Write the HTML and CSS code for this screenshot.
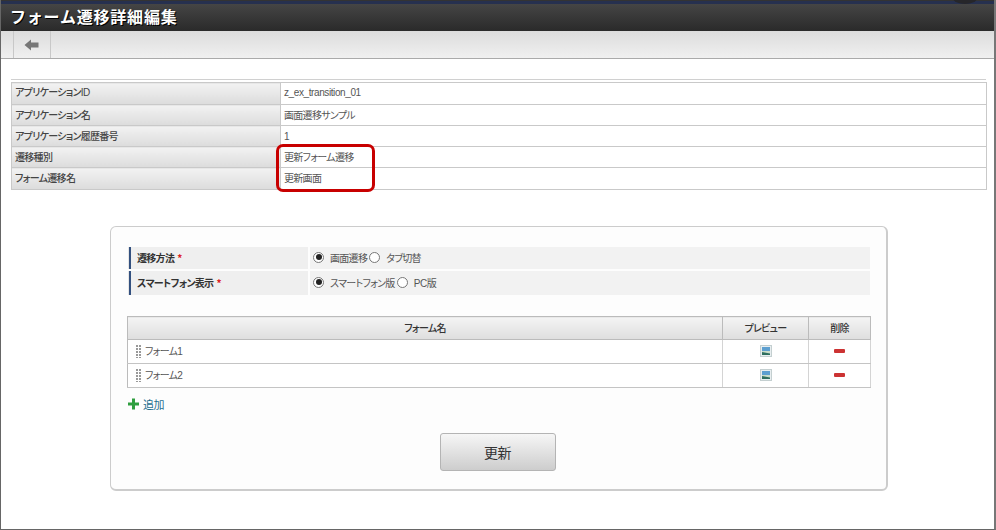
FILE: index.html
```html
<!DOCTYPE html>
<html lang="ja">
<head>
<meta charset="utf-8">
<title>フォーム遷移詳細編集</title>
<link rel="stylesheet" href="styles.css">
</head>
<body>
<div class="window">
  <div class="topline"><span class="notch"></span></div>
  <header class="titlebar"><h1 class="title">フォーム遷移詳細編集</h1></header>
  <nav class="toolbar">
    <button class="tool" type="button" aria-label="戻る">
      <svg width="16" height="12" viewBox="0 0 16 12"><path d="M0.5 6 L7 0.5 V3.5 H14.5 V8.5 H7 V11.5 Z" fill="#777"/></svg>
    </button>
  </nav>
  <main class="content">
    <div class="info-wrap">
      <table class="info">
        <tr><th>アプリケーション<span class="lat">ID</span></th><td><span class="lat">z_ex_transition_01</span></td></tr>
        <tr><th>アプリケーション名</th><td>画面遷移サンプル</td></tr>
        <tr><th>アプリケーション履歴番号</th><td><span class="lat">1</span></td></tr>
        <tr><th>遷移種別</th><td>更新フォーム遷移</td></tr>
        <tr><th>フォーム遷移名</th><td>更新画面</td></tr>
      </table>
      <div class="highlight"></div>
    </div>
    <section class="panel">
      <div class="field">
        <div class="label"><span class="label-text">遷移方法</span><span class="req">*</span></div>
        <div class="value">
          <span class="radio on"></span><span class="opt">画面遷移</span>
          <span class="radio second"></span><span class="opt opt-last">タブ切替</span>
        </div>
      </div>
      <div class="field field-2">
        <div class="label"><span class="label-text">スマートフォン表示</span><span class="req">*</span></div>
        <div class="value">
          <span class="radio on"></span><span class="opt">スマートフォン版</span>
          <span class="radio second"></span><span class="opt opt-last"><span class="lat">PC</span>版</span>
        </div>
      </div>
      <table class="forms">
        <thead>
          <tr><th class="c-name">フォーム名</th><th class="c-prev">プレビュー</th><th class="c-del">削除</th></tr>
        </thead>
        <tbody>
          <tr>
            <td class="c-name"><span class="grip"></span>フォーム<span class="lat">1</span></td>
            <td class="c-icon"><svg width="12" height="12" viewBox="0 0 12 12"><rect x=".5" y=".5" width="11" height="11" fill="#e8eef0" stroke="#c4cfd0"/><rect x="2" y="2" width="8" height="4" fill="#5d9fd0"/><path d="M2 6 H10 V10 H2 Z" fill="#c9dcc9"/><path d="M2 10 V7 L10 8.5 V10 Z" fill="#2f6f5f"/></svg></td>
            <td class="c-icon"><span class="minus"></span></td>
          </tr>
          <tr>
            <td class="c-name"><span class="grip"></span>フォーム<span class="lat">2</span></td>
            <td class="c-icon"><svg width="12" height="12" viewBox="0 0 12 12"><rect x=".5" y=".5" width="11" height="11" fill="#e8eef0" stroke="#c4cfd0"/><rect x="2" y="2" width="8" height="4" fill="#5d9fd0"/><path d="M2 6 H10 V10 H2 Z" fill="#c9dcc9"/><path d="M2 10 V7 L10 8.5 V10 Z" fill="#2f6f5f"/></svg></td>
            <td class="c-icon"><span class="minus"></span></td>
          </tr>
        </tbody>
      </table>
      <a class="add" href="#">
        <svg width="11" height="12" viewBox="0 0 11 12"><path d="M4 0.5 H7 V4.5 H11 V7.5 H7 V11.5 H4 V7.5 H0 V4.5 H4 Z" fill="#2f9e3f"/></svg>
        <span>追加</span>
      </a>
      <div class="actions"><button class="submit" type="button">更新</button></div>
    </section>
  </main>
</div>
</body>
</html>
```
FILE: styles.css
```css
* { box-sizing: border-box; }
html, body { margin: 0; padding: 0; background: #fff; }
body {
  font-family: "Noto Sans CJK JP", "Liberation Sans", sans-serif;
  font-size: 10px;
  color: #444;
  letter-spacing: -.7px;
  font-feature-settings: "palt";
}
.lat { font-family: "Liberation Sans", sans-serif; letter-spacing: -.4px; }
.window {
  position: relative;
  width: 996px;
  height: 530px;
  border-left: 1px solid #666;
  border-right: 2px solid #777;
  border-bottom: 1px solid #666;
  overflow: hidden;
}
.topline {
  position: relative;
  height: 4px;
  background: #26304f;
  border-top: 1px solid #333;
}
.notch {
  position: absolute;
  left: 952px;
  top: -9px;
  width: 24px;
  height: 12px;
  border-radius: 50%;
  background: #26262a;
}
.titlebar {
  height: 27px;
  background: linear-gradient(#454545, #2a2a2a);
  padding-left: 9px;
}
.title {
  margin: 0;
  font-size: 16px;
  line-height: 25px;
  font-weight: 700;
  color: #fff;
  letter-spacing: .8px;
  font-feature-settings: normal;
  text-shadow: 1px 1px 0 #000;
}
.toolbar {
  height: 28px;
  background: linear-gradient(#dcdcdc, #f0f0f0);
  border-bottom: 1px solid #aaa;
  padding-left: 12px;
  display: flex;
}
.tool {
  width: 38px;
  height: 27px;
  padding: 0;
  background: transparent;
  border: 0;
  border-left: 1px solid #c8c8c8;
  border-right: 1px solid #c8c8c8;
  display: flex;
  align-items: center;
  justify-content: center;
}
.content { padding: 20px 8px 0 10px; }
.info-wrap {
  position: relative;
  border-top: 1px solid #d0d0d0;
  padding-top: 2px;
}
.info {
  width: 976px;
  border-collapse: collapse;
  background: #fff;
}
.info th, .info td {
  border: 1px solid #c9c9c9;
  height: 21px;
  padding: 0 4px 0 3px;
  text-align: left;
  font-size: 10px;
  line-height: 14px;
}
.info th {
  width: 269px;
  font-weight: 500;
  color: #444;
  background: linear-gradient(#f2f2f2, #dcdcdc);
}
.info td { color: #555; }
.info tr:first-child th, .info tr:first-child td,
.info tr:last-child th, .info tr:last-child td { height: 22px; padding-bottom: 2px; }
.highlight {
  position: absolute;
  left: 265px;
  top: 64px;
  width: 99px;
  height: 48px;
  border: 3px solid #c80000;
  border-radius: 7px;
}
.panel {
  width: 778px;
  height: 265px;
  margin: 36px 0 0 99px;
  padding: 20px 16px 0 16px;
  background: #fdfdfd;
  border: 1px solid #ccc;
  border-bottom-width: 2px;
  border-right-width: 2px;
  border-radius: 6px;
}
.field {
  display: flex;
  height: 22px;
  margin-left: 2px;
  width: 741px;
  gap: 2px;
}
.field-2 { height: 24px; margin-top: 2px; }
.label {
  width: 179px;
  display: flex;
  align-items: center;
  background: #efefef;
  border-left: 2px solid #33507f;
  padding: 0 0 2px 6px;
  font-size: 10px;
  font-weight: 700;
  color: #333;
  box-shadow: -1px 0 0 #e6e6e6;
}
.req { color: #d22; margin-left: 3px; letter-spacing: 0; }
.value {
  flex: 1;
  display: flex;
  align-items: center;
  background: #f2f2f2;
  padding: 0 0 2px 3px;
  color: #555;
}
.radio {
  width: 11px;
  height: 11px;
  border: 1px solid #777;
  border-radius: 50%;
  background: #fff;
  display: flex;
  align-items: center;
  justify-content: center;
  flex: none;
}
.radio.second { margin-left: 2px; }
.radio.on::after {
  content: "";
  width: 6px;
  height: 6px;
  border-radius: 50%;
  background: #222;
}
.opt { margin-left: 6px; }
.opt-last { margin-left: 6px; }
.forms {
  width: 744px;
  margin-top: 21px;
  border-collapse: collapse;
  table-layout: fixed;
}
.forms th {
  height: 23px;
  font-size: 10px;
  font-weight: 500;
  color: #333;
  background: linear-gradient(#f4f4f4, #dedede);
  border: 1px solid #bbb;
  padding: 0 0 2px;
}
.forms td {
  height: 24px;
  background: #fff;
  border: 1px solid #c4c4c4;
  border-left-color: #d4d4d4;
  border-right-color: #d4d4d4;
  padding: 0 0 2px;
  color: #555;
}
.forms th.c-name { width: 595px; }
.forms th.c-prev { width: 86px; }
.forms td.c-name {
  padding-left: 8px;
  font-size: 10px;
  border-left-color: #bbb;
}
.c-icon { text-align: center; line-height: 0; }
.grip {
  display: inline-block;
  width: 6px;
  height: 13px;
  margin-right: 3px;
  vertical-align: -3px;
  background-image: radial-gradient(circle at 1px 1px, #999 1px, transparent 1px);
  background-size: 3px 3px;
}
.minus {
  display: inline-block;
  width: 11px;
  height: 4px;
  background: #cc3333;
  border-radius: 1px;
}
.add {
  display: flex;
  align-items: center;
  gap: 4px;
  margin: 9px 0 0 1px;
  height: 14px;
  color: #1f6f8f;
  font-size: 11px;
  text-decoration: none;
  letter-spacing: -.4px;
}
.actions {
  display: flex;
  justify-content: center;
  margin-top: 22px;
  padding-right: 2px;
}
.submit {
  width: 116px;
  height: 38px;
  padding: 0;
  font-family: inherit;
  font-size: 14px;
  color: #333;
  letter-spacing: -.5px;
  background: linear-gradient(#f6f6f6, #cdcdcd);
  border: 1px solid #b4b4b4;
  border-radius: 3px;
}
```
